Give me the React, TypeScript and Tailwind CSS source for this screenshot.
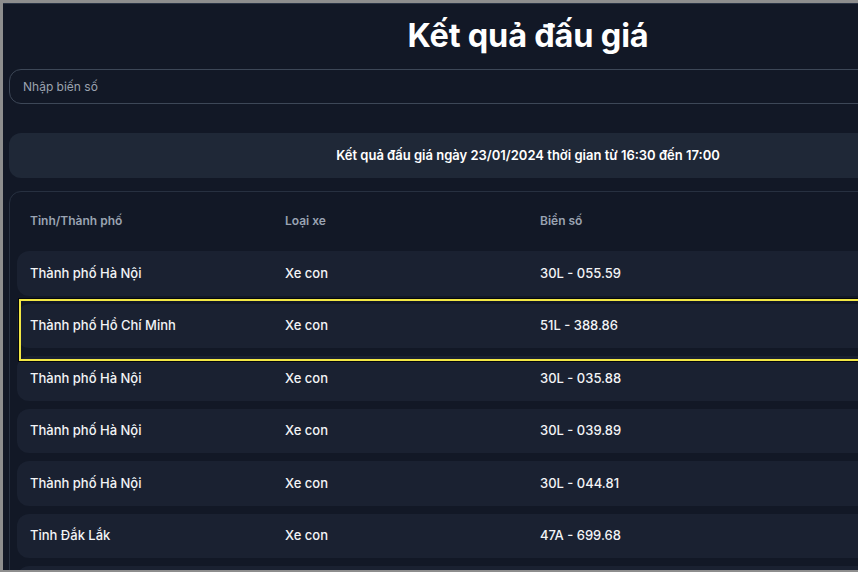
import React from "react";

const rows = [
  ["Thành phố Hà Nội", "Xe con", "30L - 055.59"],
  ["Thành phố Hồ Chí Minh", "Xe con", "51L - 388.86"],
  ["Thành phố Hà Nội", "Xe con", "30L - 035.88"],
  ["Thành phố Hà Nội", "Xe con", "30L - 039.89"],
  ["Thành phố Hà Nội", "Xe con", "30L - 044.81"],
  ["Tỉnh Đắk Lắk", "Xe con", "47A - 699.68"],
  ["", "", ""],
];

export default function App() {
  return (
    <div
      className="w-[858px] h-[572px] overflow-hidden bg-[#8e8e8e] pl-[3px] pt-[3px] pb-[2px]"
      style={{ fontFamily: "Inter, 'Noto Sans', sans-serif" }}
    >
      <div className="w-[1050px] h-full overflow-hidden bg-[#121826] border-t border-[#2a3445] px-1.5 pt-[14px]">
        <h1 className="h-9 text-center text-[32.5px] leading-9 font-bold text-white tracking-[-0.2px]">
          Kết quả đấu giá
        </h1>
        <div className="mt-[15px] h-[35px] rounded-xl border border-[#3d4757] bg-[#121826] flex items-center pl-[13px]">
          <span className="text-xs text-[#9ca3af]">Nhập biến số</span>
        </div>
        <div className="mt-[29px] h-[45px] rounded-xl bg-[#1f2837] flex items-center justify-center">
          <span className="text-[13px] font-semibold text-white">
            Kết quả đấu giá ngày 23/01/2024 thời gian từ 16:30 đến 17:00
          </span>
        </div>
        <div className="mt-[13px] rounded-xl border border-[#273040] p-[7px] pb-0">
          <div className="h-[44px] grid grid-cols-[255px_255px_1fr] items-center pl-[13px] text-xs font-semibold text-[#9aa3b2]">
            <span>Tỉnh/Thành phố</span>
            <span>Loại xe</span>
            <span>Biển số</span>
          </div>
          <div className="mt-2 flex flex-col gap-2">
            {rows.map((r, i) => (
              <div key={i} className={i === 1 ? "relative z-10" : "relative"}>
                <div className="h-[44.5px] rounded-xl bg-[#1a2131] grid grid-cols-[255px_255px_1fr] items-center pl-[13px] text-[13px] font-medium text-[#f3f4f6]">
                  <span>{r[0]}</span>
                  <span>{r[1]}</span>
                  <span>{r[2]}</span>
                </div>
                {i === 1 && (
                  <div className="absolute left-[2px] right-[-20px] top-[-5px] h-[62px] border-2 border-[#f2e744] shadow-[0_0_0_1px_#05070d]" />
                )}
              </div>
            ))}
          </div>
        </div>
      </div>
    </div>
  );
}
